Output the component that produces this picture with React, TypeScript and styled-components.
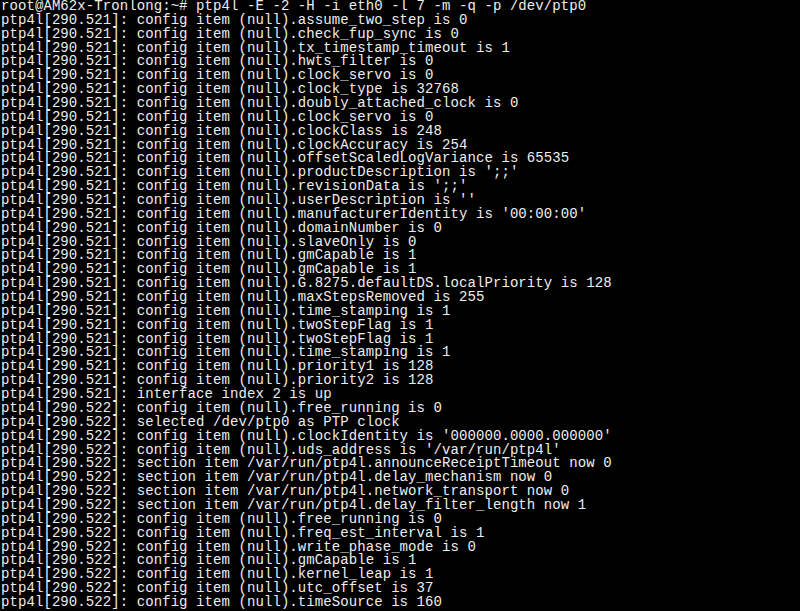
import React from 'react'
import styled, { createGlobalStyle } from 'styled-components'

const GlobalStyle = createGlobalStyle`
  html, body {
    margin: 0;
    padding: 0;
    background: #000;
  }
`

const PREFIX_1 = 'ptp4l[290.521]: '
const PREFIX_2 = 'ptp4l[290.522]: '

const lines: string[] = [
  'root@AM62x-Tronlong:~# ptp4l -E -2 -H -i eth0 -l 7 -m -q -p /dev/ptp0',
  PREFIX_1 + 'config item (null).assume_two_step is 0',
  PREFIX_1 + 'config item (null).check_fup_sync is 0',
  PREFIX_1 + 'config item (null).tx_timestamp_timeout is 1',
  PREFIX_1 + 'config item (null).hwts_filter is 0',
  PREFIX_1 + 'config item (null).clock_servo is 0',
  PREFIX_1 + 'config item (null).clock_type is 32768',
  PREFIX_1 + 'config item (null).doubly_attached_clock is 0',
  PREFIX_1 + 'config item (null).clock_servo is 0',
  PREFIX_1 + 'config item (null).clockClass is 248',
  PREFIX_1 + 'config item (null).clockAccuracy is 254',
  PREFIX_1 + 'config item (null).offsetScaledLogVariance is 65535',
  PREFIX_1 + "config item (null).productDescription is ';;'",
  PREFIX_1 + "config item (null).revisionData is ';;'",
  PREFIX_1 + "config item (null).userDescription is ''",
  PREFIX_1 + "config item (null).manufacturerIdentity is '00:00:00'",
  PREFIX_1 + 'config item (null).domainNumber is 0',
  PREFIX_1 + 'config item (null).slaveOnly is 0',
  PREFIX_1 + 'config item (null).gmCapable is 1',
  PREFIX_1 + 'config item (null).gmCapable is 1',
  PREFIX_1 + 'config item (null).G.8275.defaultDS.localPriority is 128',
  PREFIX_1 + 'config item (null).maxStepsRemoved is 255',
  PREFIX_1 + 'config item (null).time_stamping is 1',
  PREFIX_1 + 'config item (null).twoStepFlag is 1',
  PREFIX_1 + 'config item (null).twoStepFlag is 1',
  PREFIX_1 + 'config item (null).time_stamping is 1',
  PREFIX_1 + 'config item (null).priority1 is 128',
  PREFIX_1 + 'config item (null).priority2 is 128',
  PREFIX_1 + 'interface index 2 is up',
  PREFIX_2 + 'config item (null).free_running is 0',
  PREFIX_2 + 'selected /dev/ptp0 as PTP clock',
  PREFIX_2 + "config item (null).clockIdentity is '000000.0000.000000'",
  PREFIX_2 + "config item (null).uds_address is '/var/run/ptp4l'",
  PREFIX_2 + 'section item /var/run/ptp4l.announceReceiptTimeout now 0',
  PREFIX_2 + 'section item /var/run/ptp4l.delay_mechanism now 0',
  PREFIX_2 + 'section item /var/run/ptp4l.network_transport now 0',
  PREFIX_2 + 'section item /var/run/ptp4l.delay_filter_length now 1',
  PREFIX_2 + 'config item (null).free_running is 0',
  PREFIX_2 + 'config item (null).freq_est_interval is 1',
  PREFIX_2 + 'config item (null).write_phase_mode is 0',
  PREFIX_2 + 'config item (null).gmCapable is 1',
  PREFIX_2 + 'config item (null).kernel_leap is 1',
  PREFIX_2 + 'config item (null).utc_offset is 37',
  PREFIX_2 + 'config item (null).timeSource is 160',
]

const App = () => {
  return (
    <>
      <GlobalStyle />
      <Terminal>
        {lines.map((line, i) => (
          <Line key={i}>{line}</Line>
        ))}
      </Terminal>
    </>
  )
}

const Terminal = styled.div`
  width: 800px;
  height: 611px;
  overflow: hidden;
  background: #000;
  padding: 0 0 0 1px;
  box-sizing: border-box;
  display: flex;
  flex-direction: column;
`

const Line = styled.div`
  font-family: 'Liberation Mono', 'DejaVu Sans Mono', monospace;
  font-size: 14px;
  letter-spacing: 0.08px;
  line-height: 13.86px;
  height: 13.86px;
  flex-shrink: 0;
  color: #eeeeee;
  white-space: pre;
`

export default App
